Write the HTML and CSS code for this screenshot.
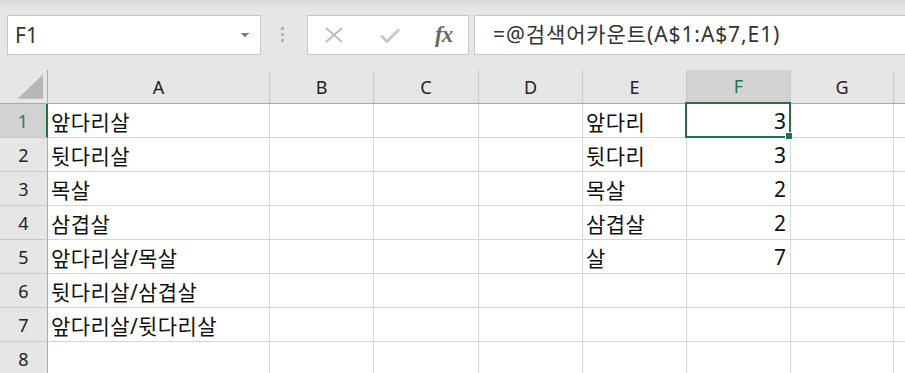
FILE: index.html
```html
<!DOCTYPE html>
<html lang="ko">
<head>
    <meta charset="UTF-8">
    <meta name="viewport" content="width=device-width, initial-scale=1.0">
    <title>검색어카운트</title>
    <link rel="stylesheet" href="styles.css">
</head>
<body>
    <div class="formula-bar">
        <div class="name-box">
            <span>F1</span>
            <svg class="dropdown" width="8" height="5" viewBox="0 0 8 5">
                <rect x="0" y="0" width="8" height="1" fill="#7a7a7a"/>
                <polygon points="1,1 7,1 4,4.5" fill="#7a7a7a"/>
            </svg>
        </div>
        <div class="grip"><i></i><i></i><i></i></div>
        <div class="fx-buttons">
            <svg class="btn-icon" width="18" height="16" viewBox="0 0 18 16">
                <path d="M1 1 L17 15 M17 1 L1 15" stroke="#bdbdbd" stroke-width="2" fill="none"/>
            </svg>
            <svg class="btn-icon" width="20" height="15" viewBox="0 0 20 15">
                <path d="M1 7.5 L7 13.5 L19 1.5" stroke="#c9c9c9" stroke-width="3" fill="none"/>
            </svg>
            <span class="fx">fx</span>
        </div>
        <div class="formula">=@검색어카운트(A$1:A$7,E1)</div>
    </div>

    <div class="sheet">
        <div class="corner">
            <svg width="48" height="33" viewBox="0 0 48 33">
                <polygon points="44,4 44,29 18,29" fill="#b6b6b6"/>
            </svg>
        </div>
        <div class="col-head">A</div>
        <div class="col-head">B</div>
        <div class="col-head">C</div>
        <div class="col-head">D</div>
        <div class="col-head">E</div>
        <div class="col-head selected">F</div>
        <div class="col-head">G</div>
        <div class="col-head last"></div>

        <div class="row-head selected">1</div>
        <div class="cell">앞다리살</div>
        <div class="cell"></div>
        <div class="cell"></div>
        <div class="cell"></div>
        <div class="cell">앞다리</div>
        <div class="cell num active">3</div>
        <div class="cell"></div>
        <div class="cell last"></div>

        <div class="row-head">2</div>
        <div class="cell">뒷다리살</div>
        <div class="cell"></div>
        <div class="cell"></div>
        <div class="cell"></div>
        <div class="cell">뒷다리</div>
        <div class="cell num">3</div>
        <div class="cell"></div>
        <div class="cell last"></div>

        <div class="row-head">3</div>
        <div class="cell">목살</div>
        <div class="cell"></div>
        <div class="cell"></div>
        <div class="cell"></div>
        <div class="cell">목살</div>
        <div class="cell num">2</div>
        <div class="cell"></div>
        <div class="cell last"></div>

        <div class="row-head">4</div>
        <div class="cell">삼겹살</div>
        <div class="cell"></div>
        <div class="cell"></div>
        <div class="cell"></div>
        <div class="cell">삼겹살</div>
        <div class="cell num">2</div>
        <div class="cell"></div>
        <div class="cell last"></div>

        <div class="row-head">5</div>
        <div class="cell">앞다리살/목살</div>
        <div class="cell"></div>
        <div class="cell"></div>
        <div class="cell"></div>
        <div class="cell">살</div>
        <div class="cell num">7</div>
        <div class="cell"></div>
        <div class="cell last"></div>

        <div class="row-head">6</div>
        <div class="cell">뒷다리살/삼겹살</div>
        <div class="cell"></div>
        <div class="cell"></div>
        <div class="cell"></div>
        <div class="cell"></div>
        <div class="cell"></div>
        <div class="cell"></div>
        <div class="cell last"></div>

        <div class="row-head">7</div>
        <div class="cell">앞다리살/뒷다리살</div>
        <div class="cell"></div>
        <div class="cell"></div>
        <div class="cell"></div>
        <div class="cell"></div>
        <div class="cell"></div>
        <div class="cell"></div>
        <div class="cell last"></div>

        <div class="row-head">8</div>
        <div class="cell"></div>
        <div class="cell"></div>
        <div class="cell"></div>
        <div class="cell"></div>
        <div class="cell"></div>
        <div class="cell"></div>
        <div class="cell"></div>
        <div class="cell last"></div>
    </div>
</body>
</html>
```

FILE: styles.css
```css
body {
    margin: 0;
    width: 905px;
    height: 373px;
    overflow: hidden;
    background-color: #e6e6e6;
    font-family: "Noto Sans", "Noto Sans CJK KR", sans-serif;
    color: #1e1e1e;
}

/* 수식 입력줄 */
.formula-bar {
    display: flex;
    align-items: flex-start;
    height: 70px;
    padding-top: 15px;
    box-sizing: border-box;
    background: linear-gradient(#d8d8d8 0, #e6e6e6 9px);
}

.name-box {
    display: flex;
    align-items: center;
    justify-content: space-between;
    width: 254px;
    height: 40px;
    margin-left: 7px;
    padding: 0 11px 0 7px;
    box-sizing: border-box;
    background-color: #fff;
    border: 1px solid #c6c6c6;
    font-size: 21px;
    color: #333;
}

.dropdown {
    margin-top: 1px;
}

.grip {
    display: flex;
    flex-direction: column;
    gap: 3px;
    width: 46px;
    padding: 12px 0 0 20px;
    box-sizing: border-box;
}

.grip i {
    display: block;
    width: 3px;
    height: 3px;
    background-color: #b4b4b4;
}

.fx-buttons {
    display: flex;
    align-items: center;
    width: 162px;
    height: 40px;
    padding-left: 17px;
    box-sizing: border-box;
    background-color: #fff;
    border: 1px solid #c6c6c6;
}

.btn-icon {
    margin-right: 37px;
}

.btn-icon + .btn-icon {
    margin-right: 35px;
}

.fx {
    font-family: "Liberation Serif", serif;
    font-style: italic;
    font-weight: bold;
    font-size: 23px;
    color: #6a6a6a;
    letter-spacing: -1px;
}

.formula {
    flex: 1;
    height: 40px;
    margin-left: 5px;
    margin-right: -2px;
    padding-left: 18px;
    box-sizing: border-box;
    background-color: #fff;
    border: 1px solid #c6c6c6;
    font-size: 21px;
    line-height: 37px;
    letter-spacing: 0.9px;
    color: #333;
    white-space: nowrap;
}

/* 시트 */
.sheet {
    display: grid;
    grid-template-columns: 48px 222px 104px 105px 104px 104px 104px 103px 1fr;
    grid-auto-rows: 34px;
}

.corner,
.col-head,
.row-head,
.cell {
    box-sizing: border-box;
    display: flex;
    align-items: center;
    white-space: nowrap;
}

.corner {
    border-right: 1px solid #ababab;
    border-bottom: 1px solid #ababab;
}

.col-head {
    justify-content: center;
    font-size: 18px;
    color: #222;
    border-right: 1px solid #c8c8c8;
    border-bottom: 1px solid #ababab;
}

.col-head.selected {
    background-color: #d2d2d2;
    color: #217346;
    border-bottom: 2px solid #217346;
}

.row-head {
    justify-content: center;
    font-size: 18px;
    color: #222;
    border-right: 1px solid #ababab;
    border-bottom: 1px solid #c8c8c8;
}

.row-head.selected {
    background-color: #d2d2d2;
    color: #3e6f5c;
    border-right: 2px solid #217346;
}

.cell {
    padding: 0 4px 0 3px;
    background-color: #fff;
    font-size: 21px;
    letter-spacing: 0.4px;
    color: #111;
    border-right: 1px solid #d4d4d4;
    border-bottom: 1px solid #d4d4d4;
}

.cell.num {
    justify-content: flex-end;
    letter-spacing: 0;
}

.last {
    border-right: none;
}

/* 선택된 셀 */
.active {
    position: relative;
}

.active::after {
    content: "";
    position: absolute;
    top: -2px;
    left: -2px;
    right: -1px;
    bottom: -1px;
    border: 2px solid #217346;
}

.active::before {
    content: "";
    position: absolute;
    right: -3px;
    bottom: -3px;
    width: 6px;
    height: 6px;
    background-color: #217346;
    border: 1px solid #fff;
    z-index: 1;
}
```
